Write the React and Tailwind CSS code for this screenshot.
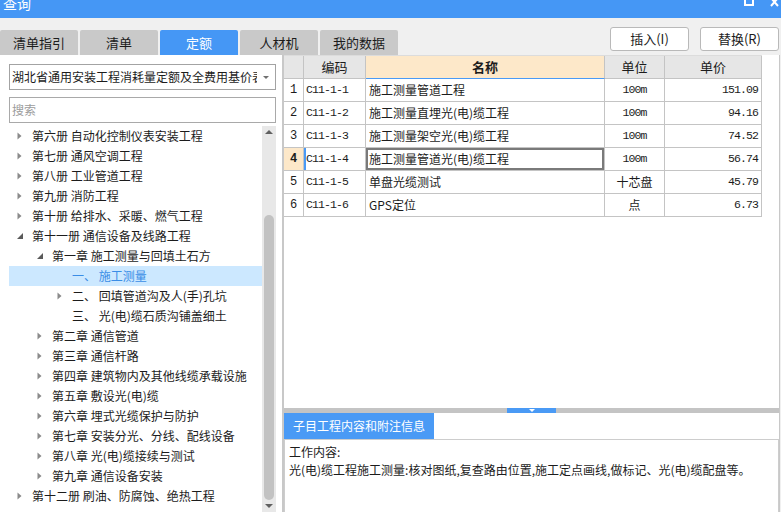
import React from "react";

const SANS = "font-[family-name:'Noto_Sans_CJK_SC','Noto_Sans',sans-serif]";
const MONO = "font-[family-name:'Liberation_Mono','Noto_Sans_CJK_SC',monospace]";

const tree = [
  { l: 0, c: "c", t: "第六册 自动化控制仪表安装工程" },
  { l: 0, c: "c", t: "第七册 通风空调工程" },
  { l: 0, c: "c", t: "第八册 工业管道工程" },
  { l: 0, c: "c", t: "第九册 消防工程" },
  { l: 0, c: "c", t: "第十册 给排水、采暖、燃气工程" },
  { l: 0, c: "e", t: "第十一册 通信设备及线路工程" },
  { l: 1, c: "e", t: "第一章 施工测量与回填土石方" },
  { l: 2, c: "", t: "一、 施工测量", sel: true },
  { l: 2, c: "c", t: "二、 回填管道沟及人(手)孔坑" },
  { l: 2, c: "", t: "三、 光(电)缆石质沟铺盖细土" },
  { l: 1, c: "c", t: "第二章 通信管道" },
  { l: 1, c: "c", t: "第三章 通信杆路" },
  { l: 1, c: "c", t: "第四章 建筑物内及其他线缆承载设施" },
  { l: 1, c: "c", t: "第五章 敷设光(电)缆" },
  { l: 1, c: "c", t: "第六章 埋式光缆保护与防护" },
  { l: 1, c: "c", t: "第七章 安装分光、分线、配线设备" },
  { l: 1, c: "c", t: "第八章 光(电)缆接续与测试" },
  { l: 1, c: "c", t: "第九章 通信设备安装" },
  { l: 0, c: "c", t: "第十二册 刷油、防腐蚀、绝热工程" },
];

const pads = ["pl-[8px]", "pl-[28px]", "pl-[48px]"];

const rows = [
  ["1", "C11-1-1", "施工测量管道工程", "100m", "151.09"],
  ["2", "C11-1-2", "施工测量直埋光(电)缆工程", "100m", "94.16"],
  ["3", "C11-1-3", "施工测量架空光(电)缆工程", "100m", "74.52"],
  ["4", "C11-1-4", "施工测量管道光(电)缆工程", "100m", "56.74"],
  ["5", "C11-1-5", "单盘光缆测试", "十芯盘", "45.79"],
  ["6", "C11-1-6", "GPS定位", "点", "6.73"],
];

function Caret({ type }) {
  if (type === "c")
    return (
      <svg width="5" height="8" viewBox="0 0 5 8">
        <path d="M0.5 0.5 L4.5 4 L0.5 7.5Z" fill="#8a8a8a" />
      </svg>
    );
  if (type === "e")
    return (
      <svg width="6" height="6" viewBox="0 0 6 6">
        <path d="M6 0 L6 6 L0 6Z" fill="#5a5a5a" />
      </svg>
    );
  return null;
}

const tabs = ["清单指引", "清单", "定额", "人材机", "我的数据"];

export default function App() {
  return (
    <div className={`w-[781px] h-[512px] overflow-hidden bg-[#f0f0f0] flex flex-col text-[12px] text-[#1c1c1c] ${SANS}`}>
      {/* title bar */}
      <div className="h-[18px] shrink-0 bg-[#4597f5] flex justify-between items-start overflow-hidden">
        <span className="text-white text-[14px] leading-[14px] -mt-[4px] ml-[3px]">查询</span>
        <svg className="mr-[1px]" width="38" height="8" viewBox="0 0 38 8">
          <rect x="3" y="-5" width="8" height="10" fill="none" stroke="#fff" strokeWidth="2" />
          <path d="M29 -2 L36 6 M36 -2 L29 6" stroke="#fff" strokeWidth="2" />
        </svg>
      </div>

      {/* toolbar */}
      <div className="h-[37px] shrink-0 flex">
        <div className="flex gap-[2px] self-end">
          {tabs.map((t) => (
            <div
              key={t}
              className={`w-[78px] h-[25px] rounded-t-[2px] flex items-center justify-center text-[13px] ${
                t === "定额" ? "bg-[#4597f5] text-white" : "bg-[#c9c9c9] text-[#1c1c1c]"
              }`}
            >
              {t}
            </div>
          ))}
        </div>
        <div className="flex-1" />
        <div className="flex gap-[11px] mt-[9px] mr-[2px] h-[24px]">
          <button className="w-[79px] h-[24px] bg-white border border-[#b9b9b9] rounded-[3px] text-[13px] text-[#1c1c1c]">
            插入(I)
          </button>
          <button className="w-[79px] h-[24px] bg-white border border-[#b9b9b9] rounded-[3px] text-[13px] text-[#1c1c1c]">
            替换(R)
          </button>
        </div>
      </div>

      {/* main */}
      <div className="flex-1 min-h-0 flex pr-[1px]">
        {/* left panel */}
        <div className="w-[282px] bg-white flex flex-col pt-[9px] pl-[9px] pr-[6px]">
          <div className="h-[26px] shrink-0 border border-[#a3a3a3] flex items-center">
            <div className="flex-1 overflow-hidden whitespace-nowrap pl-[2px] leading-[24px]">
              湖北省通用安装工程消耗量定额及全费用基价表
            </div>
            <div className="w-[18px] flex items-center justify-center">
              <svg width="6" height="3" viewBox="0 0 6 3">
                <path d="M0 0 L6 0 L3 3Z" fill="#707070" />
              </svg>
            </div>
          </div>
          <div className="h-[26px] shrink-0 mt-[7px] border border-[#a9a9a9] flex items-center pl-[2px] text-[#9c9c9c]">
            搜索
          </div>
          <div className="mt-[3px] flex flex-1 min-h-0">
            <div className="w-[253px] flex flex-col">
              {tree.map((n, i) => (
                <div
                  key={i}
                  className={`h-[20px] shrink-0 flex items-center whitespace-nowrap ${pads[n.l]} ${
                    n.sel ? "bg-[#cce8ff] text-[#3a8de6]" : "text-[#1c1c1c]"
                  }`}
                >
                  <div className="w-[15px] flex items-center">
                    <Caret type={n.c} />
                  </div>
                  <span className="leading-[20px]">{n.t}</span>
                </div>
              ))}
            </div>
            <div className="w-[14px] bg-[#e8e8e8] flex flex-col items-center">
              <div className="h-[12px] flex items-center justify-center">
                <svg width="8" height="4" viewBox="0 0 8 4">
                  <path d="M0 4 L4 0 L8 4Z" fill="#606060" />
                </svg>
              </div>
              <div className="h-[77px]" />
              <div className="w-[10px] h-[285px] rounded-full bg-[#c2c2c2]" />
              <div className="h-[12px] flex items-center justify-center">
                <svg width="8" height="4" viewBox="0 0 8 4">
                  <path d="M0 0 L8 0 L4 4Z" fill="#606060" />
                </svg>
              </div>
            </div>
          </div>
        </div>

        {/* divider */}
        <div className="w-[2px] bg-[#c8c8c8]" />

        {/* right panel */}
        <div className="flex-1 flex flex-col bg-white border-r border-[#c8c8c8]">
          <div className="flex-1">
            <div className="w-[478px] grid grid-cols-[20px_62px_239px_60px_97px] border-t border-[#dcdcdc]">
              <div className="h-[23px] bg-[#e6e6e6] border-r border-b border-[#c4c4c4]" />
              <div className="h-[23px] bg-[#e6e6e6] border-r border-b border-[#c4c4c4] flex items-center justify-center text-[13px]">
                编码
              </div>
              <div className="h-[23px] bg-[#fde8c9] border-r border-[#c4c4c4] border-b border-b-[#4a9af5] flex items-center justify-center text-[13px] font-bold">
                名称
              </div>
              <div className="h-[23px] bg-[#e6e6e6] border-r border-b border-[#c4c4c4] flex items-center justify-center text-[13px]">
                单位
              </div>
              <div className="h-[23px] bg-[#e6e6e6] border-r border-b border-[#c4c4c4] flex items-center justify-center text-[13px]">
                单价
              </div>
              {rows.map((r) => {
                const sel = r[0] === "4";
                return (
                  <React.Fragment key={r[0]}>
                    <div
                      className={`h-[23px] border-r border-b border-[#c4c4c4] flex items-center justify-center text-[12px] ${MONO} ${
                        sel ? "bg-[#fde8c9] font-bold" : ""
                      }`}
                    >
                      {r[0]}
                    </div>
                    <div
                      className={`h-[23px] border-r border-b border-[#c4c4c4] flex items-center pl-[2px] text-[11.5px] tracking-[-0.9px] ${MONO} ${
                        sel ? "shadow-[inset_2px_0_0_#4a9af5]" : ""
                      }`}
                    >
                      {r[1]}
                    </div>
                    <div
                      className={`h-[23px] border-r border-b border-[#c4c4c4] flex items-center pl-[3px] text-[12px] whitespace-nowrap ${
                        sel ? "shadow-[inset_0_0_0_2px_#7a7a7a]" : ""
                      }`}
                    >
                      {r[2]}
                    </div>
                    <div className="h-[23px] border-r border-b border-[#c4c4c4] flex items-center justify-center text-[12px]">
                      {r[3] === "100m" ? (
                        <span className={`text-[11.5px] tracking-[-0.9px] ${MONO}`}>{r[3]}</span>
                      ) : (
                        r[3]
                      )}
                    </div>
                    <div
                      className={`h-[23px] border-r border-b border-[#c4c4c4] flex items-center justify-end pr-[3px] text-[11.5px] tracking-[-0.9px] ${MONO}`}
                    >
                      {r[4]}
                    </div>
                  </React.Fragment>
                );
              })}
            </div>
          </div>

          {/* bottom section */}
          <div className="h-[104px] shrink-0 flex flex-col">
            <div className="h-[5px] bg-[#c4c4c4] flex justify-center">
              <div className="w-[49px] h-[5px] bg-[#4a9af5] flex items-start justify-center pt-[1px]">
                <svg width="6" height="3" viewBox="0 0 6 3">
                  <path d="M0 0 L6 0 L3 3Z" fill="#ffffff" />
                </svg>
              </div>
            </div>
            <div className="h-[26px] flex">
              <div className="w-[150px] h-[26px] bg-[#4a9af5] text-white flex items-center justify-center text-[12px]">
                子目工程内容和附注信息
              </div>
            </div>
            <div className="flex-1 border border-[#cdcdcd] border-b-0 pl-[4px] pt-[3px] leading-[18px] text-[12px]">
              <div>工作内容:</div>
              <div className="whitespace-nowrap">
                光(电)缆工程施工测量:核对图纸,复查路由位置,施工定点画线,做标记、光(电)缆配盘等。
              </div>
            </div>
          </div>
        </div>
      </div>
    </div>
  );
}
